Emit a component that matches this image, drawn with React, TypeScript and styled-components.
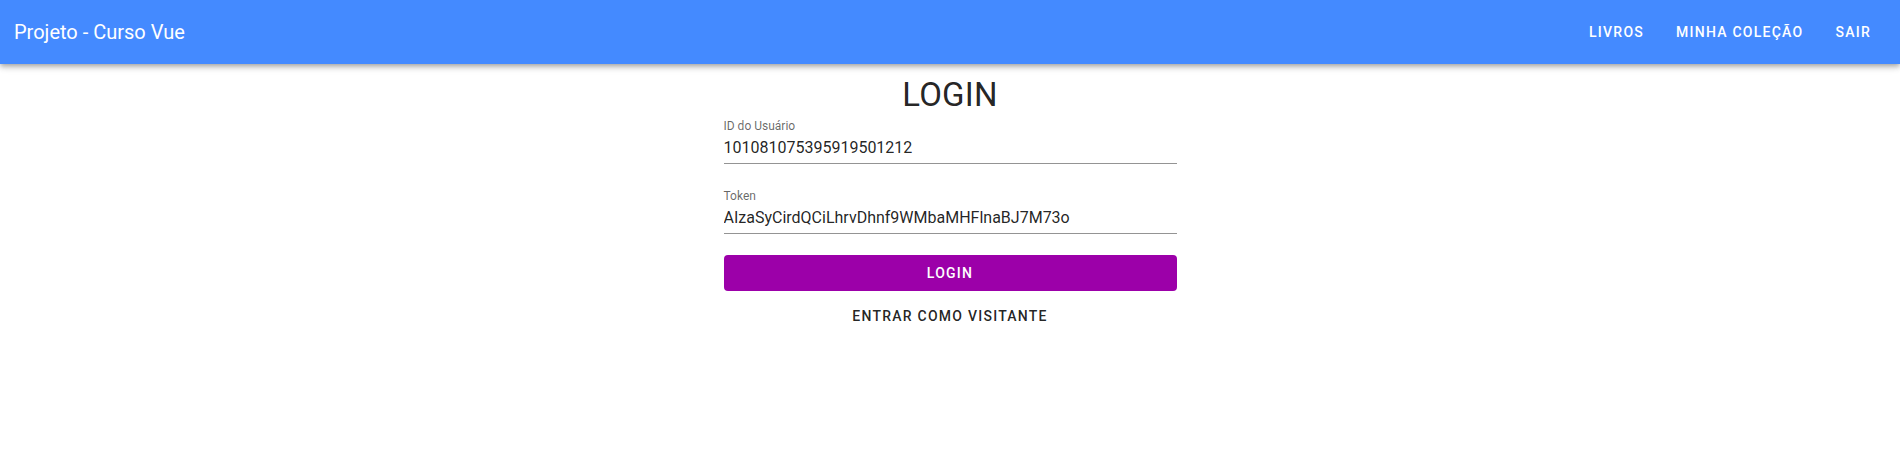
import React from "react";
import styled, { createGlobalStyle } from "styled-components";

const Global = createGlobalStyle`
  html, body { margin: 0; padding: 0; background: #ffffff; }
  body { font-family: Roboto, "Noto Sans", Arial, sans-serif; -webkit-font-smoothing: antialiased; }
  * { box-sizing: border-box; }
`;

const AppBar = styled.header`
  height: 64px;
  background: #448aff;
  display: flex;
  align-items: center;
  justify-content: space-between;
  padding: 0 13px 0 14px;
  box-shadow: 0 2px 4px -1px rgba(0, 0, 0, 0.2), 0 4px 5px 0 rgba(0, 0, 0, 0.14),
    0 1px 10px 0 rgba(0, 0, 0, 0.12);
  position: relative;
  z-index: 2;
`;

const Title = styled.div`
  color: #ffffff;
  font-size: 20px;
  line-height: 30px;
  font-weight: 400;
`;

const Nav = styled.nav`
  display: flex;
  height: 100%;
`;

const NavButton = styled.button`
  height: 100%;
  padding: 0 16px;
  border: none;
  background: transparent;
  color: #ffffff;
  font-family: inherit;
  font-size: 14px;
  font-weight: 500;
  letter-spacing: 0.0892em;
  text-transform: uppercase;
  cursor: pointer;
`;

const Main = styled.main`
  display: flex;
  justify-content: center;
`;

const Form = styled.form`
  width: 453px;
  display: flex;
  flex-direction: column;
`;

const Heading = styled.h1`
  margin: 11px 0 3px;
  text-align: center;
  font-size: 33px;
  line-height: 40px;
  font-weight: 400;
  letter-spacing: 0.25px;
  color: rgba(0, 0, 0, 0.87);
`;

const Field = styled.label<{ $gap: number }>`
  display: flex;
  flex-direction: column;
  margin-top: ${(p) => p.$gap}px;
`;

const FieldLabel = styled.span`
  font-size: 12px;
  line-height: 16px;
  color: rgba(0, 0, 0, 0.6);
`;

const Input = styled.input`
  font-family: inherit;
  font-size: 16px;
  line-height: 20px;
  height: 30px;
  padding: 3px 0 6px;
  border: none;
  border-bottom: 1px solid rgba(0, 0, 0, 0.42);
  outline: none;
  color: rgba(0, 0, 0, 0.87);
  background: transparent;
`;

const Button = styled.button<{ $primary?: boolean }>`
  height: 36px;
  border: none;
  border-radius: 4px;
  font-family: inherit;
  font-size: 14px;
  font-weight: 500;
  letter-spacing: 0.0892em;
  text-transform: uppercase;
  cursor: pointer;
  background: ${(p) => (p.$primary ? "#9c00a9" : "transparent")};
  color: ${(p) => (p.$primary ? "#ffffff" : "rgba(0, 0, 0, 0.87)")};
  margin-top: ${(p) => (p.$primary ? "21px" : "7px")};
`;

export default function App() {
  return (
    <>
      <Global />
      <AppBar>
        <Title>Projeto - Curso Vue</Title>
        <Nav>
          <NavButton>Livros</NavButton>
          <NavButton>Minha Coleção</NavButton>
          <NavButton>Sair</NavButton>
        </Nav>
      </AppBar>
      <Main>
        <Form onSubmit={(e) => e.preventDefault()}>
          <Heading>LOGIN</Heading>
          <Field $gap={0}>
            <FieldLabel>ID do Usuário</FieldLabel>
            <Input defaultValue="101081075395919501212" />
          </Field>
          <Field $gap={24}>
            <FieldLabel>Token</FieldLabel>
            <Input defaultValue="AIzaSyCirdQCiLhrvDhnf9WMbaMHFlnaBJ7M73o" />
          </Field>
          <Button type="submit" $primary>
            Login
          </Button>
          <Button type="button">Entrar como visitante</Button>
        </Form>
      </Main>
    </>
  );
}
